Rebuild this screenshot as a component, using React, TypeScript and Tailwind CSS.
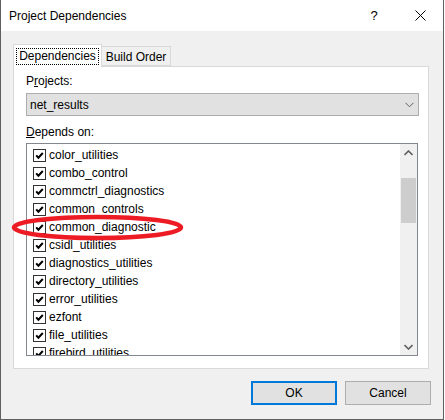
import React from 'react';

const deps = [
  'color_utilities',
  'combo_control',
  'commctrl_diagnostics',
  'common_controls',
  'common_diagnostic',
  'csidl_utilities',
  'diagnostics_utilities',
  'directory_utilities',
  'error_utilities',
  'ezfont',
  'file_utilities',
  'firebird_utilities',
];

// Small checked checkbox in the classic Win10 style
const CheckBox = () => (
  <span className="flex h-[13px] w-[13px] shrink-0 items-center justify-center border border-[#333333] bg-white">
    <svg width="11" height="11" viewBox="0 0 11 11">
      <path d="M2.2 5.4 L4.4 7.8 L8.8 3" fill="none" stroke="#000" strokeWidth="2" />
    </svg>
  </span>
);

export default function App() {
  return (
    <div className="relative flex h-[420px] w-[444px] flex-col border-x border-b border-[#5f5f5f] bg-[#f0f0f0] font-['Liberation_Sans',Arial,sans-serif] text-[12px] text-black">
      {/* Title bar */}
      <div className="flex h-[31px] shrink-0 items-center bg-white pl-[8px]">
        <span className="flex-1 text-[12px]">Project Dependencies</span>
        <span className="w-[46px] text-center text-[13px]">?</span>
        <span className="flex w-[46px] items-center justify-center">
          <svg width="11" height="11" viewBox="0 0 11 11">
            <path d="M0.5 0.5 L10.5 10.5 M10.5 0.5 L0.5 10.5" stroke="#000" strokeWidth="1" />
          </svg>
        </span>
      </div>

      {/* Tabs */}
      <div className="flex flex-col px-[12px] pt-[13px]">
        <div className="flex h-[22px] items-end">
          <div className="relative z-10 -mb-px flex h-[23px] w-[89px] items-center justify-center border-x border-t border-[#d9d9d9] bg-white">
            <span className="border border-dotted border-black px-[2px] leading-[15px]">Dependencies</span>
          </div>
          <div className="flex h-[20px] w-[69px] items-center justify-center border-y border-r border-[#d9d9d9] bg-[#f0f0f0] pt-px">
            Build Order
          </div>
        </div>

        <div className="flex h-[303px] w-[416px] flex-col border border-[#d9d9d9] bg-white px-[12px]">
          <div className="mt-[7px] leading-[15px]">
            P<span className="underline">r</span>ojects:
          </div>
          <div className="mt-[4px] flex h-[23px] w-[393px] items-center border border-[#adadad] bg-[#e1e1e1] pl-[3px] pr-[4px]">
            <span className="flex-1">net_results</span>
            <svg width="9" height="6" viewBox="0 0 9 6">
              <path d="M0.5 0.8 L4.5 4.8 L8.5 0.8" fill="none" stroke="#606060" strokeWidth="1" />
            </svg>
          </div>
          <div className="mt-[9px] leading-[15px]">
            <span className="underline">D</span>epends on:
          </div>
          <div className="mt-[3px] flex h-[213px] w-[392px] border border-[#828790] bg-white">
            <div className="flex flex-1 flex-col overflow-hidden pl-[6px] pt-[2px]">
              {deps.map((d) => (
                <div key={d} className="flex h-[18px] shrink-0 items-center gap-[3px]">
                  <CheckBox />
                  <span className="whitespace-nowrap">{d}</span>
                </div>
              ))}
            </div>
            {/* Scrollbar */}
            <div className="flex w-[17px] flex-col bg-[#f0f0f0]">
              <div className="flex h-[17px] items-center justify-center">
                <svg width="9" height="6" viewBox="0 0 9 6">
                  <path d="M0.5 5 L4.5 1 L8.5 5" fill="none" stroke="#606060" strokeWidth="1.6" />
                </svg>
              </div>
              <div className="mx-px mt-[17px] h-[45px] bg-[#cdcdcd]" />
              <div className="flex-1" />
              <div className="flex h-[17px] items-center justify-center">
                <svg width="9" height="6" viewBox="0 0 9 6">
                  <path d="M0.5 1 L4.5 5 L8.5 1" fill="none" stroke="#606060" strokeWidth="1.6" />
                </svg>
              </div>
            </div>
          </div>
        </div>
      </div>

      {/* Buttons */}
      <div className="mt-[12px] flex justify-end gap-[8px] pr-[12px]">
        <button className="flex h-[24px] w-[86px] items-center justify-center border-2 border-[#0078d7] bg-[#e1e1e1]">
          OK
        </button>
        <button className="flex h-[24px] w-[86px] items-center justify-center border border-[#adadad] bg-[#e1e1e1]">
          Cancel
        </button>
      </div>

      {/* Red highlight ellipse drawn over the list */}
      <svg className="pointer-events-none absolute left-0 top-0" width="444" height="420">
        <ellipse cx="96.5" cy="227.5" rx="83.5" ry="10.5" fill="none" stroke="#ed1c24" strokeWidth="4.5" />
      </svg>
    </div>
  );
}
